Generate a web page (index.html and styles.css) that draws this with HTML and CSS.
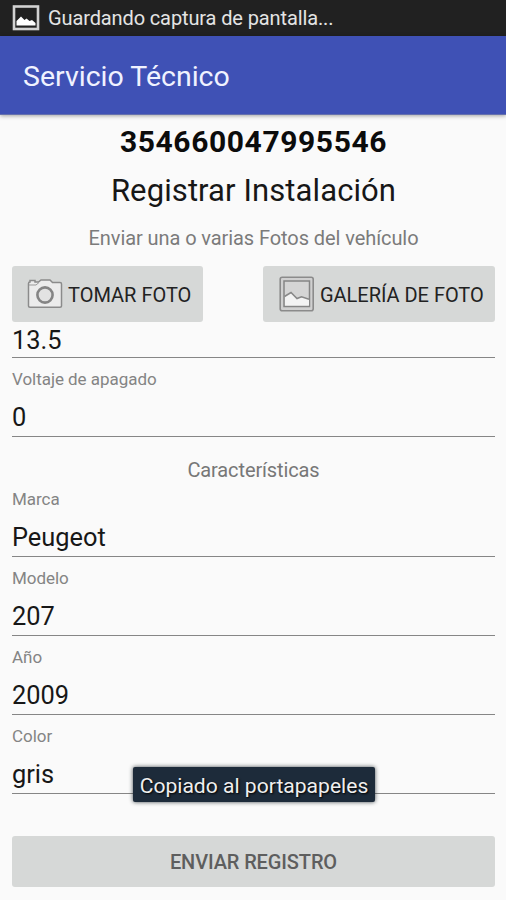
FILE: index.html
```html
<!DOCTYPE html>
<html lang="es">
<head>
<meta charset="utf-8">
<title>Servicio Técnico</title>
<link rel="stylesheet" href="styles.css">
</head>
<body>
<div class="status">
  <svg class="status-icon" width="28" height="26" viewBox="0 0 28 26">
    <rect x="2" y="1.500" width="24" height="22.500" fill="none" stroke="#d2d2d2" stroke-width="2.600"/>
    <path d="M4.500 20.500v-4.500l4.500-4.500 3.500 3.500 2-1.500 3 2.500 2.500-1 3.500 3v2.500z" fill="#fff"/>
  </svg>
  <span class="status-text">Guardando captura de pantalla...</span>
</div>
<header class="appbar"><h1 class="app-title">Servicio Técnico</h1></header>
<main class="content">
  <div class="imei">354660047995546</div>
  <h2 class="heading">Registrar Instalación</h2>
  <p class="hint">Enviar una o varias Fotos del vehículo</p>
  <div class="photo-actions">
    <button class="btn btn-camera">
      <svg width="36" height="30" viewBox="0 0 36 30">
        <path d="M1.500 4.500Q1.500 3 3 3V1.500h5V3h3.500l2.500-2h9l2.500 2.500H33q1.500 0 1.500 1.500v22q0 1.200-1.500 1.200H3q-1.500 0-1.500-1.200z" fill="#ececec" stroke="#8b8b8b" stroke-width="1.500"/>
        <path d="M2 6h7l3-2.500" fill="none" stroke="#999" stroke-width="1"/>
        <circle cx="18" cy="16" r="7.600" fill="#e2e2e2" stroke="#858585" stroke-width="2.600"/>
      </svg>
      <span>TOMAR FOTO</span>
    </button>
    <button class="btn btn-gallery">
      <svg width="36" height="36" viewBox="0 0 36 36">
        <rect x="1.200" y="1.200" width="33" height="33.500" rx="2" fill="#d0d0d0" stroke="#8b8b8b" stroke-width="1.600"/>
        <rect x="5" y="5" width="25.500" height="25.500" fill="#d5d5d5" stroke="#858585" stroke-width="1.500"/>
        <path d="M6 20l6-3.500 6 6 4.500-1.800 7.500 2.500V29.500H6z" fill="#f3f3f3"/>
        <path d="M5.500 20.500l6.500-4 6 6 4.500-1.800 7.500 2.500" fill="none" stroke="#888" stroke-width="1.500"/>
      </svg>
      <span>GALERÍA DE FOTO</span>
    </button>
  </div>
  <div class="field field-first"><div class="value">13.5</div></div>
  <div class="field"><div class="label">Voltaje de apagado</div><div class="value">0</div></div>
  <div class="section">Características</div>
  <div class="field"><div class="label">Marca</div><div class="value">Peugeot</div></div>
  <div class="field"><div class="label">Modelo</div><div class="value">207</div></div>
  <div class="field"><div class="label">Año</div><div class="value">2009</div></div>
  <div class="field"><div class="label">Color</div><div class="value">gris</div></div>
  <button class="btn submit">ENVIAR REGISTRO</button>
</main>
<div class="toast">Copiado al portapapeles</div>
</body>
</html>
```
FILE: styles.css
```css
* { box-sizing: border-box; }
body {
  margin: 0;
  width: 506px;
  height: 900px;
  overflow: hidden;
  position: relative;
  background: #fafafa;
  color: #171717;
  font-family: Roboto, "Liberation Sans", sans-serif;
}
h1, h2, p { margin: 0; font-weight: 400; }
.status {
  display: flex;
  align-items: center;
  height: 36px;
  padding-left: 12px;
  background: #212121;
  color: #e4e4e4;
}
.status-icon { margin-right: 8px; }
.status-text { font-size: 20px; line-height: 36px; letter-spacing: -.12px; }
.appbar {
  display: flex;
  align-items: center;
  height: 79px;
  padding: 3px 0 0 23px;
  background: #3f51b5;
  border-bottom: 1px solid #6570ad;
  box-shadow: 0 1px 4px rgba(0, 0, 0, .35);
}
.app-title { font-size: 28.5px; line-height: 75px; color: #f0f2ff; }
.content { padding: 3px 11px 0 12px; }
.imei { height: 48px; line-height: 48px; font-size: 30px; font-weight: 700; letter-spacing: .6px; text-align: center; color: #0c0c0c; }
.heading { height: 48px; line-height: 49px; font-size: 31px; letter-spacing: .1px; text-align: center; }
.hint { height: 52px; line-height: 48px; font-size: 20px; letter-spacing: -.08px; text-align: center; color: #7b7b7b; }
.photo-actions { display: flex; justify-content: space-between; height: 56px; }
.btn {
  display: flex;
  align-items: center;
  height: 56px;
  padding: 0;
  border: 0;
  border-radius: 3px;
  background: #d6d8d7;
  color: #222;
  font: 400 20px/56px Roboto, sans-serif;
  white-space: nowrap;
}
.btn svg { flex: none; }
.btn span { padding-top: 1px; }
.btn-camera { width: 191px; padding-left: 15px; gap: 5px; }
.btn-gallery { width: 232px; padding-left: 16px; gap: 5px; letter-spacing: -.03px; }
.field {
  height: 79px;
  padding-top: 9px;
  border-bottom: 1.5px solid #868686;
}
.field-first { height: 36px; padding-top: 2px; }
.label { height: 25px; line-height: 25px; font-size: 17px; letter-spacing: -.04px; color: #848484; }
.value { height: 32px; margin-top: 9px; line-height: 33px; font-size: 25.4px; }
.field-first .value { margin-top: 0; }
.section { height: 41px; padding-top: 9px; line-height: 48px; font-size: 20px; letter-spacing: -.12px; text-align: center; color: #777; }
.submit { justify-content: center; width: 100%; height: 51px; margin-top: 42px; color: #5e5e5e; font-weight: 500; letter-spacing: -.12px; }
.toast {
  position: absolute;
  left: 133px;
  top: 767px;
  width: 242px;
  height: 35px;
  border-radius: 2px;
  background: #1d2b3a;
  color: #efefef;
  font-size: 21.1px;
  line-height: 38px;
  text-align: center;
  white-space: nowrap;
  box-shadow: 0 0 4px rgba(20, 30, 35, .8);
  text-shadow: 1px 1px 2px #000;
}
```
